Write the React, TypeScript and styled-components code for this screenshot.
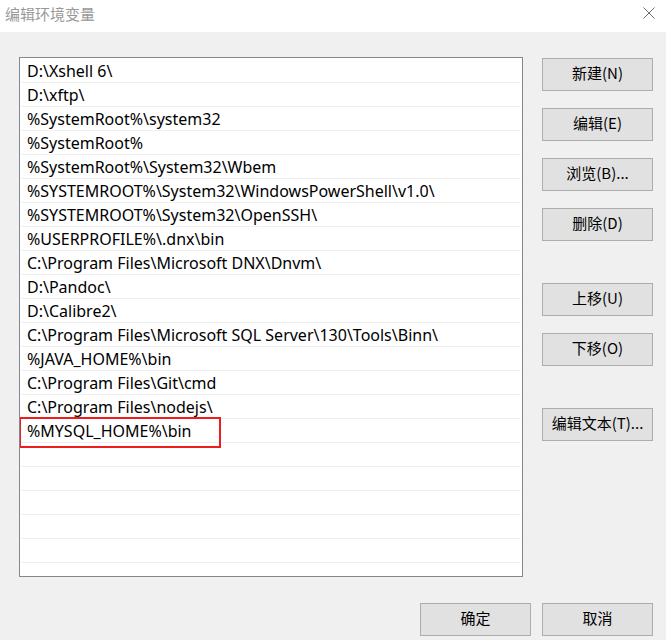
import React from 'react'
import styled, { createGlobalStyle } from 'styled-components'

const GlobalStyle = createGlobalStyle`
  html, body {
    margin: 0;
    padding: 0;
    background: #f0f0f0;
  }
  * {
    box-sizing: border-box;
  }
`

const paths = [
  'D:\\Xshell 6\\',
  'D:\\xftp\\',
  '%SystemRoot%\\system32',
  '%SystemRoot%',
  '%SystemRoot%\\System32\\Wbem',
  '%SYSTEMROOT%\\System32\\WindowsPowerShell\\v1.0\\',
  '%SYSTEMROOT%\\System32\\OpenSSH\\',
  '%USERPROFILE%\\.dnx\\bin',
  'C:\\Program Files\\Microsoft DNX\\Dnvm\\',
  'D:\\Pandoc\\',
  'D:\\Calibre2\\',
  'C:\\Program Files\\Microsoft SQL Server\\130\\Tools\\Binn\\',
  '%JAVA_HOME%\\bin',
  'C:\\Program Files\\Git\\cmd',
  'C:\\Program Files\\nodejs\\',
  '%MYSQL_HOME%\\bin',
]

const TOTAL_ROWS = 22

const App: React.FC = () => {
  const rows = [...paths, ...Array(TOTAL_ROWS - paths.length).fill('')]
  return (
    <Dialog>
      <GlobalStyle />
      <TitleBar>
        <Title>编辑环境变量</Title>
        <CloseIcon viewBox="0 0 12 12">
          <path d="M0.5 0.5 L11.5 11.5 M11.5 0.5 L0.5 11.5" stroke="#6f6f6f" strokeWidth="1" fill="none" />
        </CloseIcon>
      </TitleBar>
      <Body>
        <ListBox>
          {rows.map((text, i) => (
            <Row key={i}>{text}</Row>
          ))}
          <Highlight />
        </ListBox>
        <Actions>
          <ActionGroup>
            <Button>新建(N)</Button>
            <Button>编辑(E)</Button>
            <Button>浏览(B)...</Button>
            <Button>删除(D)</Button>
          </ActionGroup>
          <ActionGroup>
            <Button>上移(U)</Button>
            <Button>下移(O)</Button>
          </ActionGroup>
          <ActionGroup>
            <Button>编辑文本(T)...</Button>
          </ActionGroup>
        </Actions>
      </Body>
      <Footer>
        <Button>确定</Button>
        <Button>取消</Button>
      </Footer>
    </Dialog>
  )
}

export default App

const Dialog = styled.div`
  width: 666px;
  height: 640px;
  background: #f0f0f0;
  overflow: hidden;
  font-family: "Noto Sans", "Noto Sans CJK SC", sans-serif;
`

const TitleBar = styled.div`
  height: 32px;
  background: #ffffff;
  display: flex;
  align-items: center;
  justify-content: space-between;
  padding: 0 10px 0 5px;
`

const Title = styled.div`
  font-family: "Noto Sans CJK SC", sans-serif;
  font-size: 15px;
  color: #999999;
  margin-top: -5px;
`

const CloseIcon = styled.svg`
  width: 12px;
  height: 12px;
  margin-top: -6px;
  margin-right: 1px;
`

const Body = styled.div`
  display: grid;
  grid-template-columns: 504px 111px;
  column-gap: 19px;
  padding: 25px 0 0 19px;
`

const ListBox = styled.div`
  position: relative;
  height: 520px;
  background: #ffffff;
  border: 1px solid #828790;
  padding: 1px 1px 0 1px;
  overflow: hidden;
`

const Row = styled.div`
  height: 24px;
  border-bottom: 1px solid #f0f0f0;
  padding-left: 6px;
  font-size: 16px;
  line-height: 24px;
  color: #000000;
  white-space: nowrap;
`

const Highlight = styled.div`
  position: absolute;
  left: -1px;
  top: 359px;
  width: 202px;
  height: 31px;
  border: 2px solid #ee1c1c;
  pointer-events: none;
`

const Actions = styled.div`
  display: flex;
  flex-direction: column;
  gap: 42px;
  padding-top: 1px;
`

const ActionGroup = styled.div`
  display: flex;
  flex-direction: column;
  gap: 17px;
`

const Button = styled.button`
  width: 111px;
  height: 33px;
  background: #e1e1e1;
  border: 1px solid #adadad;
  border-radius: 0;
  font-family: "Noto Sans CJK SC", sans-serif;
  font-size: 15px;
  line-height: 27px;
  color: #000000;
  padding: 0 0 4px 0;
`

const Footer = styled.div`
  display: flex;
  justify-content: flex-end;
  gap: 11px;
  padding: 26px 13px 0 0;
`
